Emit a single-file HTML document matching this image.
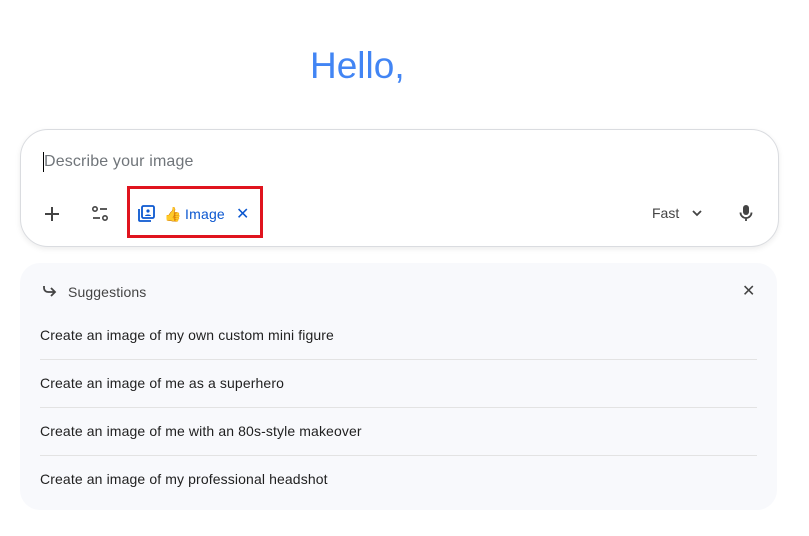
<!DOCTYPE html>
<html><head><style>
body{margin:0;width:809px;height:536px;background:#fff;font-family:"Liberation Sans",Arial,sans-serif;position:relative;overflow:hidden}
.hello{position:absolute;left:310px;top:45px;font-size:37px;color:#4285f4;}
.box{position:absolute;left:20px;top:129px;width:757px;height:116px;border:1px solid #dadce0;border-radius:28px;box-shadow:0 2px 6px rgba(0,0,0,.08);background:#fff}
.ph{position:absolute;left:44px;top:153px;font-size:16px;color:#70757a;letter-spacing:0.15px}
.cur{position:absolute;left:43px;top:152px;width:1px;height:20px;background:#000}
.red{position:absolute;left:127px;top:186px;width:136px;height:52px;border:3px solid #e0141e;box-sizing:border-box}
.s{position:absolute;left:20px;top:263px;width:757px;height:247px;background:#f8f9fc;border-radius:20px}
.t{position:absolute;left:40px;font-size:14px;color:#1f1f1f;letter-spacing:0.12px}
.line{position:absolute;left:40px;width:717px;height:1px;background:#e3e3e3}
</style></head><body>
<div class="hello">Hello,</div>
<div class="box"></div>
<div class="cur"></div>
<div class="ph">Describe your image</div>
<svg style="position:absolute;left:42px;top:204px" width="20" height="20" viewBox="0 0 20 20"><path d="M10 3v14M3 10h14" stroke="#444" stroke-width="2"/></svg>
<svg style="position:absolute;left:90px;top:204px" width="20" height="20" viewBox="0 0 20 20"><circle cx="5" cy="5" r="2.2" fill="none" stroke="#444" stroke-width="1.6"/><path d="M10 5h7M3 14h7" stroke="#444" stroke-width="1.8"/><circle cx="15" cy="14" r="2.2" fill="none" stroke="#444" stroke-width="1.6"/></svg>
<div class="red"></div>
<svg style="position:absolute;left:137px;top:205px" width="18" height="18" viewBox="0 0 18 18"><rect x="5" y="1" width="12" height="12" rx="1.5" fill="none" stroke="#0b57d0" stroke-width="1.8"/><path d="M2 4v11a1 1 0 0 0 1 1h11" fill="none" stroke="#0b57d0" stroke-width="1.8"/><circle cx="11" cy="6" r="1.6" fill="#0b57d0"/><path d="M8 11c0-2 6-2 6 0" fill="#0b57d0"/></svg>
<div style="position:absolute;left:164px;top:206px;font-size:14px">👍</div>
<div style="position:absolute;left:185px;top:206px;font-size:14px;color:#0b57d0;letter-spacing:0.2px">Image</div>
<div style="position:absolute;left:236px;top:204px;font-size:16px;color:#0b57d0">✕</div>
<div style="position:absolute;left:652px;top:205px;font-size:14px;color:#444">Fast</div>
<svg style="position:absolute;left:691px;top:208px" width="12" height="10" viewBox="0 0 12 10"><path d="M2 3l4 4 4-4" fill="none" stroke="#444" stroke-width="1.8"/></svg>
<svg style="position:absolute;left:738px;top:204px" width="16" height="18" viewBox="0 0 16 18"><rect x="5" y="1" width="6" height="10" rx="3" fill="#444"/><path d="M2.5 8.5a5.5 5.5 0 0 0 11 0M8 14v3" fill="none" stroke="#444" stroke-width="1.8"/></svg>
<div class="s"></div>
<svg style="position:absolute;left:41px;top:284px" width="18" height="16" viewBox="0 0 18 16"><path d="M3 2v2a4 4 0 0 0 4 4h7M10 4l4 4-4 4" fill="none" stroke="#444" stroke-width="1.8"/></svg>
<div class="t" style="left:68px;top:284px;color:#444">Suggestions</div>
<div style="position:absolute;left:742px;top:281px;font-size:16px;color:#444">✕</div>
<div class="t" style="top:327px">Create an image of my own custom mini figure</div>
<div class="line" style="top:359px"></div>
<div class="t" style="top:375px">Create an image of me as a superhero</div>
<div class="line" style="top:407px"></div>
<div class="t" style="top:423px">Create an image of me with an 80s-style makeover</div>
<div class="line" style="top:455px"></div>
<div class="t" style="top:471px">Create an image of my professional headshot</div>
</body></html>
